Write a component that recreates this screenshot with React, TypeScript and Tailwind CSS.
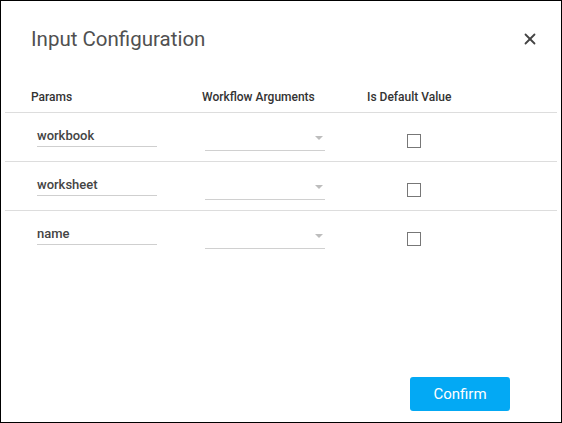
import { X } from "lucide-react";

const params = ["workbook", "worksheet", "name"];

function ParamRow({ name, last }: { name: string; last: boolean }) {
  return (
    <div
      className={`grid grid-cols-[171px_165px_1fr] h-[49px] pl-[26px] pt-[11px] ${
        last ? "" : "border-b border-[#dddddd]"
      }`}
    >
      {/* param name */}
      <div className="pl-[6px]">
        <div className="w-[120px] h-[23px] border-b border-[#cfcfcf] text-[13px] font-medium text-[#444] leading-[24px]">
          {name}
        </div>
      </div>

      {/* workflow argument select */}
      <div className="pl-[3px] pt-[4px]">
        <div className="relative w-[120px] h-[23px] border-b border-[#d0d0d0]">
          <span className="absolute right-[2px] top-[8px] w-0 h-0 border-l-[4px] border-r-[4px] border-t-[4px] border-l-transparent border-r-transparent border-t-[#bdbdbd]" />
        </div>
      </div>

      {/* default value checkbox */}
      <div className="pl-[40px] pt-[10px]">
        <div className="w-[14px] h-[14px] border border-[#777]" />
      </div>
    </div>
  );
}

export default function App() {
  return (
    <div
      className="w-[562px] h-[423px] bg-white border border-black flex flex-col"
      style={{ fontFamily: "Roboto, 'Liberation Sans', sans-serif" }}
    >
      {/* Title bar */}
      <div className="flex items-start justify-between pl-[30px] pr-[22px] pt-[26px] h-[78px]">
        <h1 className="text-[20.5px] leading-[24px] text-[#505050] font-normal">Input Configuration</h1>
        <X className="w-[18px] h-[18px] mt-[3px] text-[#444]" strokeWidth={2.4} />
      </div>

      {/* Table */}
      <div className="mx-[4px]">
        <div className="grid grid-cols-[171px_165px_1fr] h-[34px] pl-[26px] pt-[10px] border-b border-[#dddddd] text-[12px] font-medium text-[#333] leading-[16px]">
          <span>Params</span>
          <span>Workflow Arguments</span>
          <span>Is Default Value</span>
        </div>
        {params.map((p, i) => (
          <ParamRow key={p} name={p} last={i === params.length - 1} />
        ))}
      </div>

      {/* Footer */}
      <div className="flex-1 flex items-end justify-end pr-[51px] pb-[11px]">
        <button className="w-[100px] h-[34px] rounded-[3px] bg-[#03a9f4] text-white text-[15px]">
          Confirm
        </button>
      </div>
    </div>
  );
}
